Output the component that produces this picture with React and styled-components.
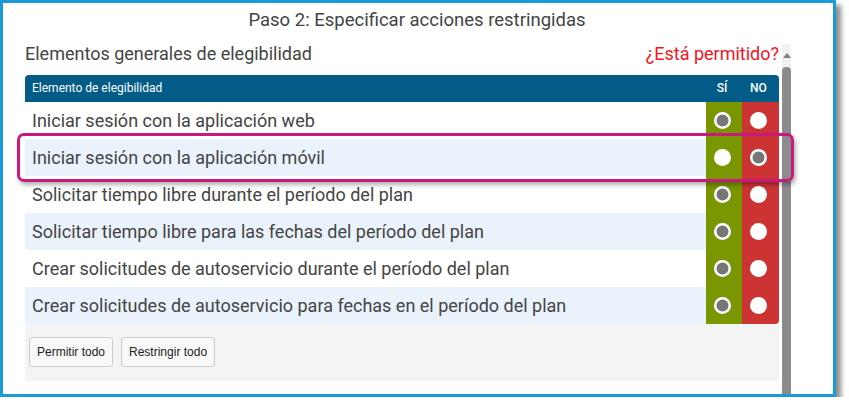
import React from 'react'
import styled, { createGlobalStyle } from 'styled-components'

const GlobalStyle = createGlobalStyle`
    html, body {
        margin: 0;
        padding: 0;
        background: #ffffff;
    }
    body {
        font-family: Roboto, "Liberation Sans", Arial, sans-serif;
    }
`

const Frame = styled.div`
    position: relative;
    box-sizing: border-box;
    width: 836px;
    height: 397px;
    border: 3px solid #1a9ad8;
    background: #ffffff;
    box-shadow: 5px 5px 5px rgba(0, 0, 0, 0.45);
    display: flex;
    flex-direction: column;
`

const Title = styled.div`
    height: 35px;
    line-height: 35px;
    text-align: center;
    font-size: 18.5px;
    color: #444444;
    padding-right: 2px;
`

const Body = styled.div`
    flex: 1;
    display: flex;
    align-items: stretch;
`

const Main = styled.div`
    width: 754px;
    margin-left: 22px;
    display: flex;
    flex-direction: column;
`

const SectionHead = styled.div`
    height: 37px;
    display: flex;
    justify-content: space-between;
    align-items: flex-start;
    line-height: 32px;
    font-size: 18px;
    color: #444444;
`

const Allowed = styled.span`
    color: #f5141e;
`

const Table = styled.div`
    border-radius: 4px 4px 4px 0;
    overflow: hidden;
`

const Grid = styled.div`
    display: grid;
    grid-template-columns: 1fr 36px 37px;
    align-items: stretch;
`

const HeadRow = styled(Grid)`
    height: 27px;
    background: #035b87;
    color: #ffffff;
    font-size: 12px;
    line-height: 27px;
`

const HeadLabel = styled.div`
    padding-left: 7px;
`

const HeadCell = styled.div`
    text-align: center;
    padding-right: 4px;
    font-weight: 500;
`

const Row = styled(Grid)`
    height: 37px;
    background: ${p => (p.$alt ? '#eaf2fb' : '#ffffff')};
`

const Label = styled.div`
    padding-left: 7px;
    line-height: 37px;
    font-size: 18px;
    color: #444444;
    white-space: nowrap;
`

const Choice = styled.div`
    display: flex;
    align-items: center;
    justify-content: center;
    padding-right: 4px;
    background: ${p => (p.$kind === 'yes' ? '#7a9600' : '#cc3333')};
`

const Radio = styled.span`
    box-sizing: border-box;
    width: 17px;
    height: 17px;
    border-radius: 50%;
    background: ${p => (p.$checked ? '#767676' : '#ffffff')};
    box-shadow: ${p => (p.$checked ? 'inset 0 0 0 2.5px #ffffff' : 'none')};
`

const Footer = styled.div`
    height: 57px;
    background: #f4f4f4;
    display: flex;
    align-items: flex-start;
    gap: 8px;
    padding: 13px 4px 0;
    box-sizing: border-box;
`

const Button = styled.button`
    height: 30px;
    padding: 0 7px;
    font-family: "Liberation Sans", Arial, sans-serif;
    font-size: 12px;
    color: #222222;
    background: #f8f8f8;
    border: 1px solid #cccccc;
    border-radius: 3px;
`

const Scrollbar = styled.div`
    width: 9px;
    margin-left: 3px;
    margin-top: 6px;
    background: #f1f1f1;
    display: flex;
    flex-direction: column;
    align-items: center;
`

const Arrow = styled.div`
    margin-top: 9px;
    width: 0;
    height: 0;
    border-left: 4px solid transparent;
    border-right: 4px solid transparent;
    border-bottom: 5px solid #7e7e7e;
`

const Thumb = styled.div`
    flex: 1;
    width: 9px;
    margin-top: 9px;
    background: #8c8c8c;
    border-radius: 4px 4px 0 0;
`

const Highlight = styled.div`
    position: absolute;
    left: 14px;
    top: 130px;
    width: 777px;
    height: 49px;
    box-sizing: border-box;
    border: 3px solid #c8197f;
    border-radius: 7px;
    box-shadow: 2px 3px 4px rgba(0, 0, 0, 0.3);
    pointer-events: none;
`

const items = [
    { label: 'Iniciar sesión con la aplicación web', allowed: true },
    { label: 'Iniciar sesión con la aplicación móvil', allowed: false },
    { label: 'Solicitar tiempo libre durante el período del plan', allowed: true },
    { label: 'Solicitar tiempo libre para las fechas del período del plan', allowed: true },
    { label: 'Crear solicitudes de autoservicio durante el período del plan', allowed: true },
    { label: 'Crear solicitudes de autoservicio para fechas en el período del plan', allowed: true },
]

function App() {
    return (
        <>
            <GlobalStyle />
            <Frame>
                <Title>Paso 2: Especificar acciones restringidas</Title>
                <Body>
                    <Main>
                        <SectionHead>
                            <span>Elementos generales de elegibilidad</span>
                            <Allowed>¿Está permitido?</Allowed>
                        </SectionHead>
                        <Table>
                            <HeadRow>
                                <HeadLabel>Elemento de elegibilidad</HeadLabel>
                                <HeadCell>SÍ</HeadCell>
                                <HeadCell>NO</HeadCell>
                            </HeadRow>
                            {items.map((item, i) => (
                                <Row key={item.label} $alt={i % 2 === 1}>
                                    <Label>{item.label}</Label>
                                    <Choice $kind='yes'>
                                        <Radio $checked={item.allowed} />
                                    </Choice>
                                    <Choice $kind='no'>
                                        <Radio $checked={!item.allowed} />
                                    </Choice>
                                </Row>
                            ))}
                        </Table>
                        <Footer>
                            <Button>Permitir todo</Button>
                            <Button>Restringir todo</Button>
                        </Footer>
                    </Main>
                    <Scrollbar>
                        <Arrow />
                        <Thumb />
                    </Scrollbar>
                </Body>
                <Highlight />
            </Frame>
        </>
    )
}

export default App
